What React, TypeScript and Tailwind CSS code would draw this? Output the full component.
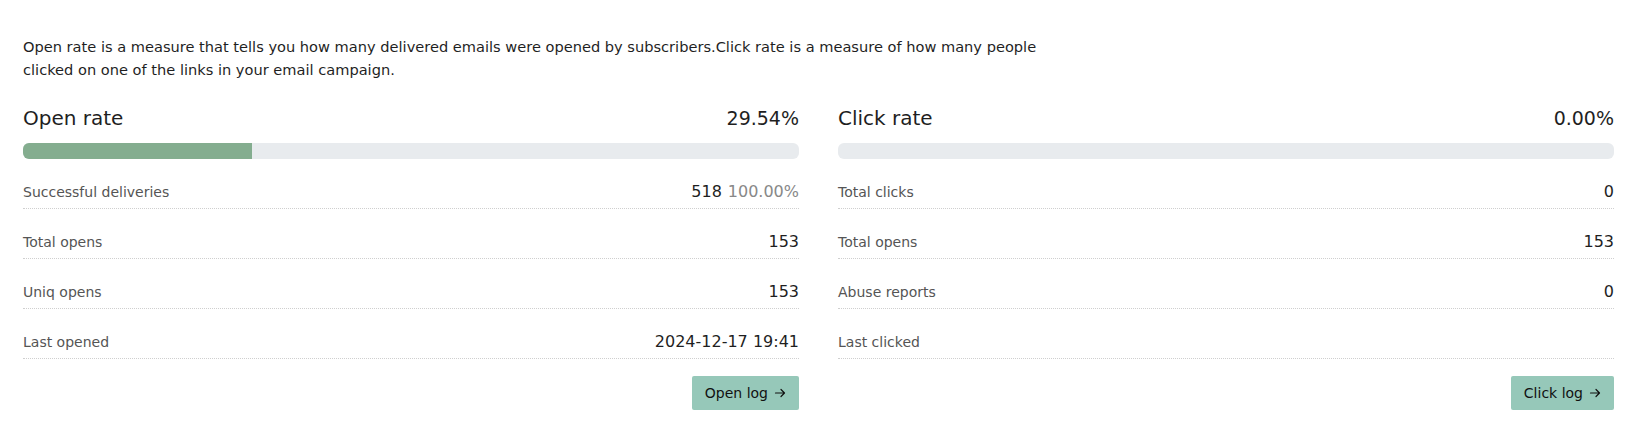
const FONT = "font-['DejaVu_Sans',sans-serif]";

type Row = { label: string; value?: string; extra?: string };

const OPEN_ROWS: Row[] = [
  { label: "Successful deliveries", value: "518", extra: "100.00%" },
  { label: "Total opens", value: "153" },
  { label: "Uniq opens", value: "153" },
  { label: "Last opened", value: "2024-12-17 19:41" }
];

const CLICK_ROWS: Row[] = [
  { label: "Total clicks", value: "0" },
  { label: "Total opens", value: "153" },
  { label: "Abuse reports", value: "0" },
  { label: "Last clicked" }
];

function ArrowRight() {
  return (
    <svg width="12" height="12" viewBox="0 0 12 12" fill="none" stroke="currentColor" strokeWidth="1.2" strokeLinecap="round" strokeLinejoin="round">
      <path d="M1.5 6h9M7 2.5 10.5 6 7 9.5" />
    </svg>
  );
}

function StatCard({ title, rate, pct, rows, button }: { title: string; rate: string; pct: number; rows: Row[]; button: string }) {
  return (
    <div className="flex flex-col">
      <div className="flex h-[30px] items-center justify-between text-[#1f1f1f]">
        <span className="text-[20px]">{title}</span>
        <span className="text-[19px]">{rate}</span>
      </div>
      <div className="mt-[10px] h-4 overflow-hidden rounded-md bg-[#e8ebee]">
        <div className="h-full bg-[#84ad8f]" style={{ width: `${pct}%` }} />
      </div>
      <div className="flex flex-col">
        {rows.map((r) => (
          <div key={r.label} className="flex h-[50px] items-center justify-between border-b border-dotted border-[#cfcfcf] pt-[17px]">
            <span className="text-[14px] text-[#555]">{r.label}</span>
            <span className="text-[16px] text-[#1f1f1f]">
              {r.value}
              {r.extra && <span className="ml-1.5 text-[#888]">{r.extra}</span>}
            </span>
          </div>
        ))}
      </div>
      <div className="mt-[17px] flex justify-end">
        <button className="flex h-[34px] items-center gap-1.5 rounded-[2px] bg-[#96c8b9] px-[13px] text-[14px] text-[#111]">
          {button}
          <ArrowRight />
        </button>
      </div>
    </div>
  );
}

export default function App() {
  return (
    <div className={`${FONT} min-h-[437px] bg-white pl-[23px] pt-[35px]`}>
      <p className="max-w-[1050px] text-[14.6px] leading-[23px] text-[#1f1f1f]">
        Open rate is a measure that tells you how many delivered emails were opened by subscribers.Click rate is a measure of how many people clicked on one of the links in your email campaign.
      </p>
      <div className="mt-[22px] grid w-[1591px] grid-cols-2 gap-[39px]">
        <StatCard title="Open rate" rate="29.54%" pct={29.54} rows={OPEN_ROWS} button="Open log" />
        <StatCard title="Click rate" rate="0.00%" pct={0} rows={CLICK_ROWS} button="Click log" />
      </div>
    </div>
  );
}
